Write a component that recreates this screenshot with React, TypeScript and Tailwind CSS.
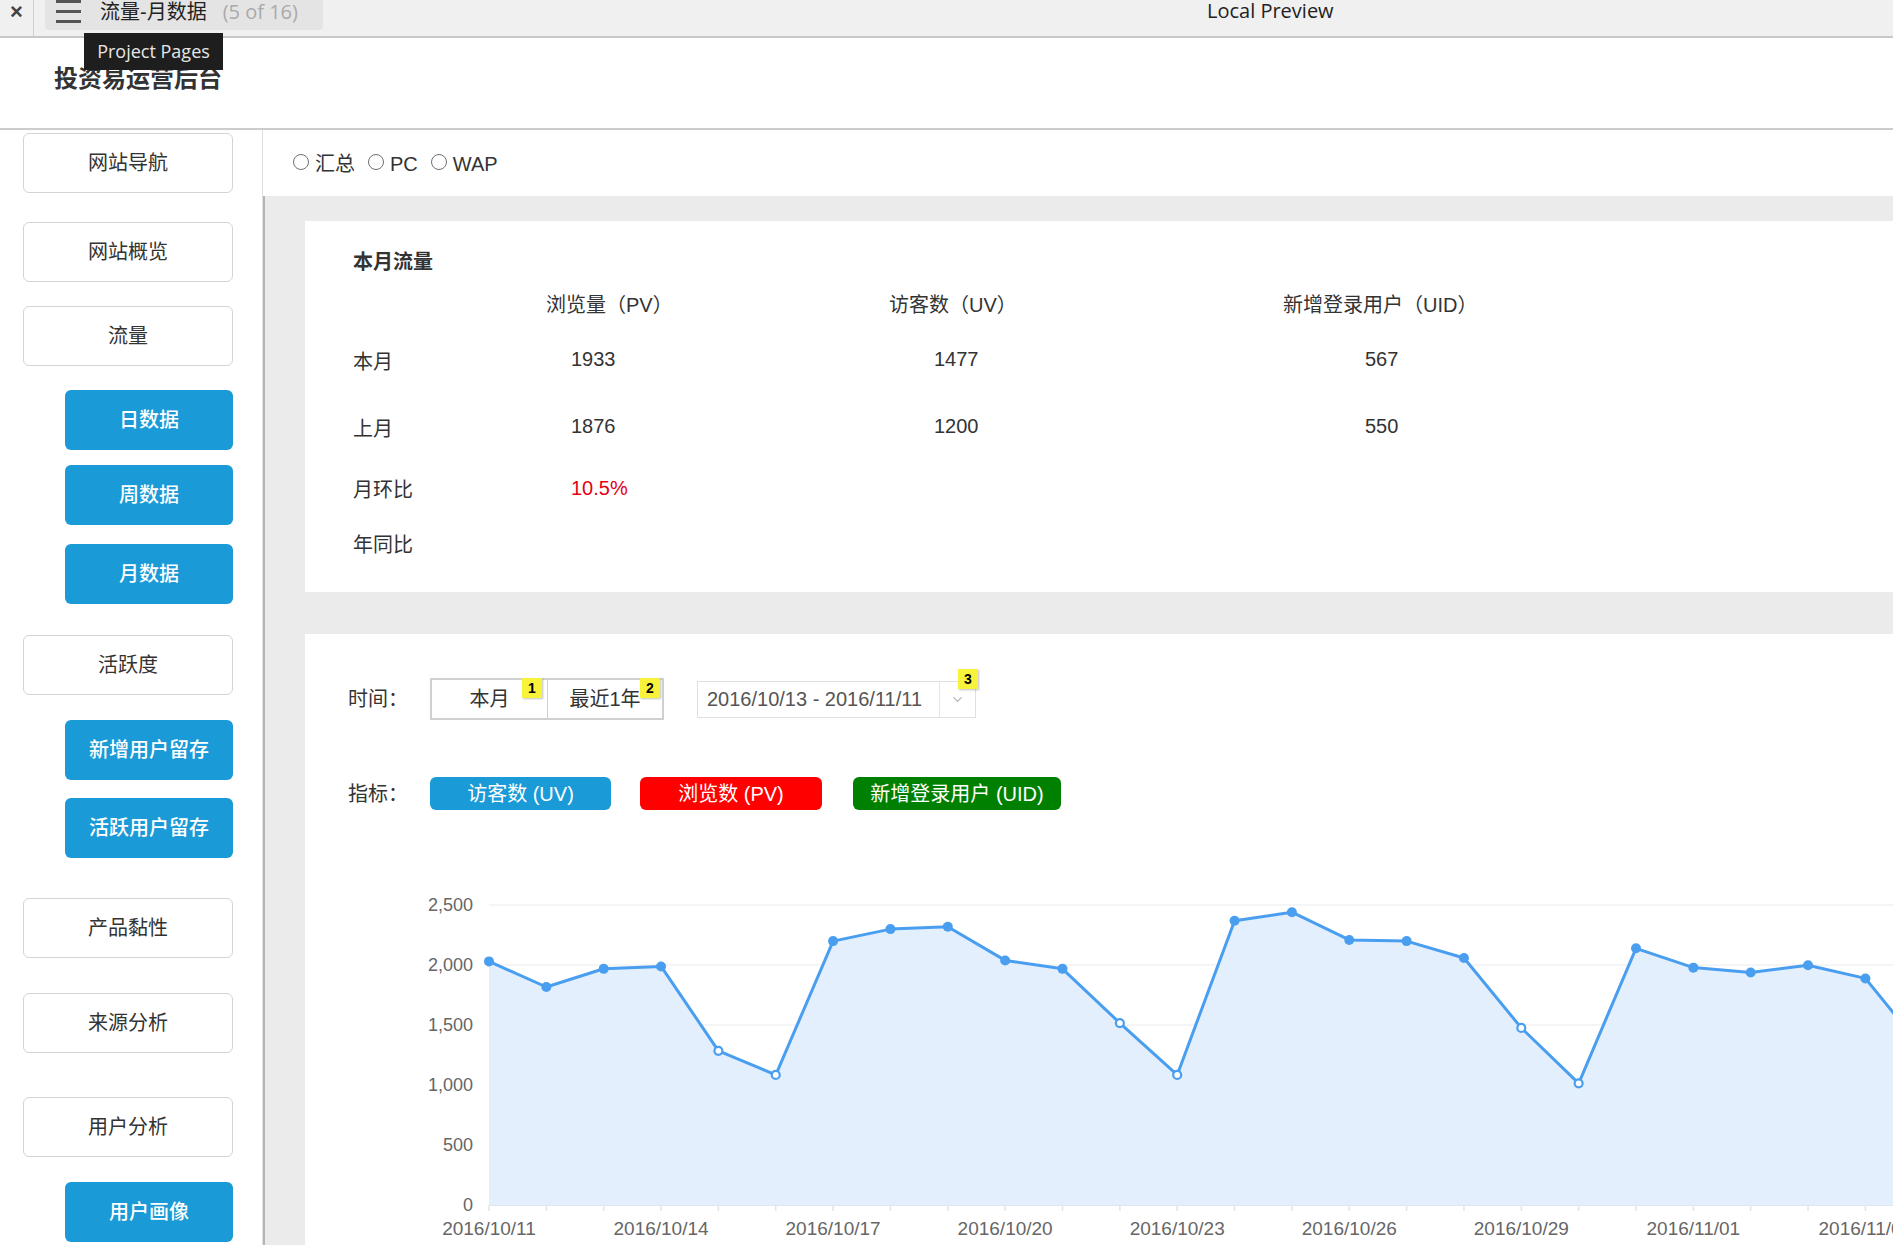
import { ChevronDown } from "lucide-react";

// sidebar entries: kind w = outlined, b = blue sub-item; mt = gap above
const navItems = [
  { label: "网站导航", kind: "w", mt: "mt-[3px]" },
  { label: "网站概览", kind: "w", mt: "mt-[29px]" },
  { label: "流量", kind: "w", mt: "mt-[24px]" },
  { label: "日数据", kind: "b", mt: "mt-[24px]" },
  { label: "周数据", kind: "b", mt: "mt-[15px]" },
  { label: "月数据", kind: "b", mt: "mt-[19px]" },
  { label: "活跃度", kind: "w", mt: "mt-[31px]" },
  { label: "新增用户留存", kind: "b", mt: "mt-[25px]" },
  { label: "活跃用户留存", kind: "b", mt: "mt-[18px]" },
  { label: "产品黏性", kind: "w", mt: "mt-[40px]" },
  { label: "来源分析", kind: "w", mt: "mt-[35px]" },
  { label: "用户分析", kind: "w", mt: "mt-[44px]" },
  { label: "用户画像", kind: "b", mt: "mt-[25px]" },
];

const uv = [
  2030, 1817, 1968, 1988, 1285, 1084, 2199, 2299, 2319, 2038, 1968, 1516, 1084, 2369,
  2440, 2209, 2199, 2058, 1476, 1014, 2139, 1978, 1938, 1998, 1888, 1300, 1050,
];
const weekend = new Set([4, 5, 11, 12, 18, 19, 25, 26]);
const xLabels: Record<number, string> = {
  0: "2016/10/11",
  3: "2016/10/14",
  6: "2016/10/17",
  9: "2016/10/20",
  12: "2016/10/23",
  15: "2016/10/26",
  18: "2016/10/29",
  21: "2016/11/01",
  24: "2016/11/04",
};

const X0 = 184;
const STEP = 57.35;
const BASE = 345;
const px = (i: number) => X0 + i * STEP;
const py = (v: number) => BASE - v * 0.12;

function Chart() {
  const pts = uv.map((v, i) => `${px(i).toFixed(1)},${py(v).toFixed(1)}`);
  const area = `M${px(0)},${BASE} L${pts.join(" L")} L${px(uv.length - 1)},${BASE} Z`;
  const yTicks = ["2,500", "2,000", "1,500", "1,000", "500", "0"];
  return (
    <svg width="1588" height="385" className="block mt-[50px]">
      {yTicks.map((t, k) => (
        <g key={t}>
          <line
            x1={X0}
            x2={1588}
            y1={45 + k * 60}
            y2={45 + k * 60}
            stroke={k === 5 ? "#dfe6ef" : "#f2f2f2"}
            strokeWidth={k === 5 ? 2 : 1.5}
          />
          <text x={168} y={45 + k * 60 + 6} textAnchor="end" fontSize="18" fill="#666" fontFamily="Liberation Sans, sans-serif">
            {t}
          </text>
        </g>
      ))}
      {uv.map((_, i) => (
        <line key={i} x1={px(i)} x2={px(i)} y1={BASE} y2={BASE + 6} stroke="#dfe6ef" strokeWidth={1.5} />
      ))}
      <path d={area} fill="#e3effc" />
      <polyline points={pts.join(" ")} fill="none" stroke="#4a9ef0" strokeWidth={3} strokeLinejoin="round" />
      {uv.map((v, i) =>
        weekend.has(i) ? (
          <circle key={i} cx={px(i)} cy={py(v)} r={4} fill="#fff" stroke="#4a9ef0" strokeWidth={2.2} />
        ) : (
          <circle key={i} cx={px(i)} cy={py(v)} r={5} fill="#4a9ef0" />
        )
      )}
      {Object.entries(xLabels).map(([i, t]) => (
        <text key={t} x={px(Number(i))} y={375} textAnchor="middle" fontSize="19" fill="#666" fontFamily="Liberation Sans, sans-serif">
          {t}
        </text>
      ))}
    </svg>
  );
}

function Badge({ n, className }: { n: number; className: string }) {
  return (
    <span
      className={`absolute w-[20px] h-[20px] bg-[#f7f23a] shadow-[1px_1px_2px_rgba(0,0,0,0.25)] flex items-center justify-center text-[14px] font-bold text-black leading-none ${className}`}
    >
      {n}
    </span>
  );
}

function Radio({ label }: { label: string }) {
  return (
    <label className="flex items-center">
      <span className="w-[16px] h-[16px] rounded-full border border-[#707070] bg-white" />
      <span className="ml-[6px] mr-[13px] text-[20px] text-[#333] leading-none translate-y-[2px]">{label}</span>
    </label>
  );
}

export default function App() {
  return (
    <div className="relative w-[1893px] h-[1245px] overflow-hidden bg-white font-['Liberation_Sans','Noto_Sans_CJK_SC',sans-serif] text-[#333]">
      {/* preview chrome bar */}
      <div className="h-[38px] bg-[#f0f0f0] border-b-2 border-[#c8c8c8] flex items-start">
        <div className="w-[34px] h-[36px] border-r border-[#cfcfcf] flex justify-center pt-[1px] text-[22px] leading-none font-bold text-[#444]">
          ×
        </div>
        <div className="ml-[11px] w-[278px] h-[30px] bg-[#e4e4e4] rounded-b-[4px] flex items-start">
          <div className="ml-[11px] w-[25px] flex flex-col gap-[7px] pt-0">
            <span className="h-[3px] bg-[#555]" />
            <span className="h-[3px] bg-[#555]" />
            <span className="h-[3px] bg-[#555]" />
          </div>
          <span className="ml-[19px] text-[20px] leading-[24px] text-[#222]">流量-月数据</span>
          <span className="ml-[16px] text-[20px] leading-[24px] text-[#aaa] font-['Open_Sans',sans-serif]">(5 of 16)</span>
        </div>
        <span className="ml-[884px] text-[20px] leading-[22px] text-[#222] font-['Open_Sans',sans-serif]">Local Preview</span>
      </div>

      {/* header */}
      <div className="h-[92px] border-b-2 border-[#cccccc] flex items-center pl-[54px] pb-[8px]">
        <h1 className="text-[24px] font-bold text-[#333] leading-none">投资易运营后台</h1>
      </div>

      <div className="flex h-[1115px]">
        {/* sidebar */}
        <nav className="w-[263px] shrink-0 border-r border-[#e0e0e0] flex flex-col">
          {navItems.map((it) =>
            it.kind === "w" ? (
              <div
                key={it.label}
                className={`${it.mt} ml-[23px] w-[210px] h-[60px] shrink-0 rounded-[6px] border border-[#d4d4d4] bg-white flex items-center justify-center text-[20px] text-[#333]`}
              >
                {it.label}
              </div>
            ) : (
              <div
                key={it.label}
                className={`${it.mt} ml-[65px] w-[168px] h-[60px] shrink-0 rounded-[6px] bg-[#1a9ad6] flex items-center justify-center text-[20px] font-medium text-white`}
              >
                {it.label}
              </div>
            )
          )}
        </nav>

        {/* main */}
        <main className="flex-1 flex flex-col min-w-0">
          <div className="h-[66px] shrink-0 bg-white flex items-center pl-[30px] pb-[2px]">
            <Radio label="汇总" />
            <Radio label="PC" />
            <Radio label="WAP" />
          </div>

          <div className="flex-1 bg-[#ebebeb] border-l-2 border-[#b4b4b4] pl-[40px] pt-[25px]">
            {/* monthly traffic card */}
            <section className="h-[371px] bg-white pl-[48px] pt-[19px] text-[20px] text-[#333]">
              <div className="h-[44px] flex items-center font-bold">本月流量</div>
              <div className="h-[42px] flex items-center">
                <span className="w-[193px]" />
                <span className="w-[343px]">浏览量（PV）</span>
                <span className="w-[394px]">访客数（UV）</span>
                <span>新增登录用户（UID）</span>
              </div>
              <div className="h-[72px] flex items-center">
                <span className="w-[193px]">本月</span>
                <span className="w-[343px] pl-[25px] pb-[6px]">1933</span>
                <span className="w-[394px] pl-[45px] pb-[6px]">1477</span>
                <span className="pl-[82px] pb-[6px]">567</span>
              </div>
              <div className="h-[62px] flex items-center">
                <span className="w-[193px]">上月</span>
                <span className="w-[343px] pl-[25px] pb-[6px]">1876</span>
                <span className="w-[394px] pl-[45px] pb-[6px]">1200</span>
                <span className="pl-[82px] pb-[6px]">550</span>
              </div>
              <div className="h-[60px] flex items-center">
                <span className="w-[193px]">月环比</span>
                <span className="pl-[25px] pb-[4px] text-[#e60012]">10.5%</span>
              </div>
              <div className="h-[50px] flex items-center">
                <span className="w-[193px]">年同比</span>
              </div>
            </section>

            {/* trend card */}
            <section className="mt-[42px] h-[700px] bg-white pt-[44px] text-[20px] text-[#333]">
              <div className="h-[42px] flex items-center pl-[43px]">
                <span className="w-[82px]">时间：</span>
                <div className="relative flex h-[42px] border-2 border-[#d0d0d0]">
                  <button className="w-[116px] h-full flex items-center justify-center border-r border-[#d0d0d0] text-[20px] text-[#333]">
                    本月
                  </button>
                  <button className="w-[114px] h-full flex items-center justify-center text-[20px] text-[#333]">
                    最近1年
                  </button>
                  <Badge n={1} className="left-[90px] -top-[2px]" />
                  <Badge n={2} className="left-[208px] -top-[2px]" />
                </div>
                <div className="relative ml-[33px] w-[279px] h-[37px] border border-[#e0e0e0] flex items-center">
                  <span className="w-[241px] pl-[9px] text-[20px] text-[#555] leading-none">2016/10/13 - 2016/11/11</span>
                  <span className="h-full border-l border-[#e6e6e6] flex-1 flex items-center justify-center">
                    <ChevronDown size={15} color="#b5b5b5" strokeWidth={2} />
                  </span>
                  <Badge n={3} className="left-[260px] -top-[13px]" />
                </div>
              </div>

              <div className="mt-[57px] h-[33px] flex items-center pl-[43px]">
                <span className="w-[82px]">指标：</span>
                <span className="w-[181px] h-[33px] rounded-[6px] bg-[#1a9ad6] text-white flex items-center justify-center">
                  访客数 (UV)
                </span>
                <span className="ml-[29px] w-[182px] h-[33px] rounded-[6px] bg-[#ff0000] text-white flex items-center justify-center">
                  浏览数 (PV)
                </span>
                <span className="ml-[31px] w-[208px] h-[33px] rounded-[6px] bg-[#008000] text-white flex items-center justify-center">
                  新增登录用户 (UID)
                </span>
              </div>

              <Chart />
            </section>
          </div>
        </main>
      </div>

      {/* hover tooltip from the preview chrome */}
      <div className="absolute left-[84px] top-[33px] w-[139px] h-[37px] bg-[#1e1e1e] flex items-center justify-center text-[18px] text-[#e6e6e6] font-['Open_Sans',sans-serif]">
        Project Pages
      </div>
    </div>
  );
}
